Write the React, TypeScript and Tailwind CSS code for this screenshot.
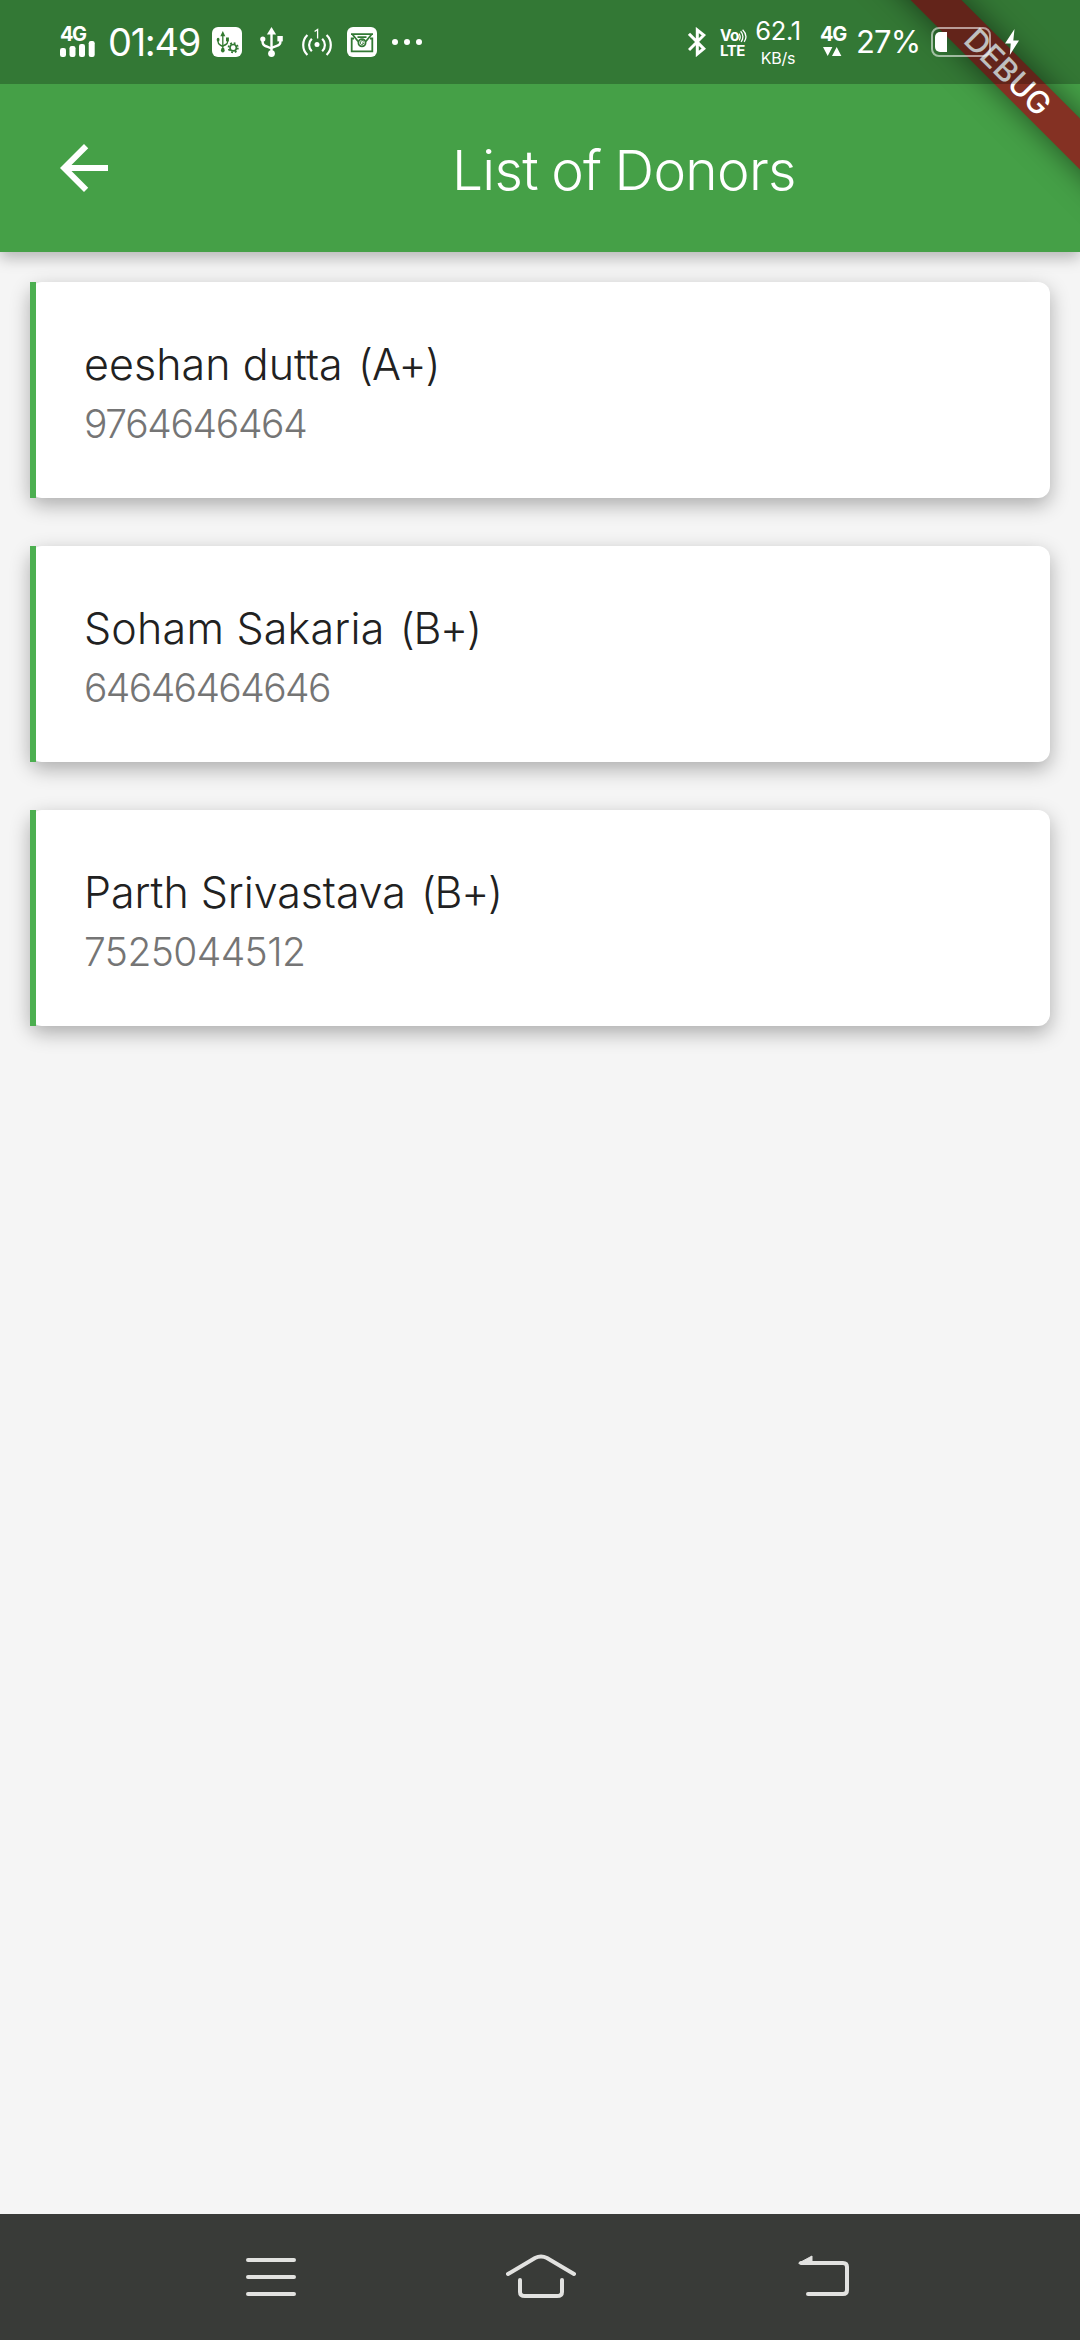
import React from "react";

const donors = [
  { name: "eeshan dutta", group: "(A+)", phone: "9764646464", nameClass: "tracking-[0.05px]", groupClass: "tracking-[-1px]", phoneClass: "tracking-[-1.35px]" },
  { name: "Soham Sakaria", group: "(B+)", phone: "64646464646", nameClass: "tracking-[0.2px]", groupClass: "tracking-[-1.3px]", phoneClass: "tracking-[-1.6px]" },
  { name: "Parth Srivastava", group: "(B+)", phone: "7525044512", nameClass: "tracking-[-0.05px]", groupClass: "tracking-[-1.3px]", phoneClass: "tracking-[-0.6px]" },
];

function UsbShape() {
  return (
    <g fill="none" stroke="currentColor" strokeWidth="2.4">
      <path d="M11.5 6v20" />
      <path d="M2.6 12.5v2.2c0 3 1.6 4 4 4.8l4.9 2M20.4 13v2c0 2.4-1.4 3.2-3.6 3.9l-5.3 2" />
      <path d="M11.5 0l4.6 7.4H6.9z" fill="currentColor" stroke="none" />
      <circle cx="11.5" cy="26.6" r="3.4" fill="currentColor" stroke="none" />
      <circle cx="2.8" cy="12" r="2.6" fill="currentColor" stroke="none" />
      <path d="M17.4 9h5.4v5.4h-5.4z" fill="currentColor" stroke="none" />
    </g>
  );
}

function StatusBar() {
  return (
    <div className="relative z-10 flex h-[84px] items-start overflow-hidden bg-black/25 text-white">
      <div className="ml-[60px] mt-[27px] w-[35px]">
        <div className="h-[14px] text-[20px] leading-[14px] font-bold tracking-[-1.6px]">4G</div>
        <svg className="block" width="35" height="16" viewBox="0 0 35 16" fill="currentColor">
          <rect x="0" y="7" width="6" height="9" rx="2.2" />
          <rect x="9.5" y="5" width="6" height="11" rx="2.2" />
          <rect x="19" y="3" width="6" height="13" rx="2.2" />
          <rect x="28.7" y="0" width="6" height="16" rx="2.2" />
        </svg>
      </div>
      <div className="ml-[13px] mt-[22px] w-[93px] text-[38px] leading-[40px] tracking-[-1.3px] whitespace-nowrap">01:49</div>
      <svg className="ml-[11px] mt-[27px] block" width="30" height="30" viewBox="0 0 30 30">
        <rect width="30" height="30" rx="6" fill="#fff" />
        <g className="text-[#32792f]" transform="translate(4.6 4) scale(.54 .72)"><UsbShape /></g>
        <circle cx="21.2" cy="20.7" r="5.6" fill="#fff" />
        <circle cx="21.2" cy="20.7" r="3.2" fill="none" stroke="#327934" strokeWidth="1.7" />
        <circle cx="21.2" cy="20.7" r="4.7" fill="none" stroke="#327934" strokeWidth="1.7" strokeDasharray="1.85 1.84" />
      </svg>
      <svg className="ml-[18px] mt-[27px] block" width="23" height="30" viewBox="0 0 23 30"><UsbShape /></svg>
      <svg className="ml-[19px] mt-[27px] block" width="30" height="30" viewBox="0 0 30 30" fill="none" stroke="currentColor" strokeWidth="2.2">
        <path d="M5.4 8C-.2 13.5-.2 22.5 5.4 28M24.6 8c5.6 5.5 5.6 14.5 0 20M9.8 11.8c-3.6 3.6-3.6 8.8 0 12.4M20.2 11.8c3.6 3.6 3.6 8.8 0 12.4" />
        <circle cx="15" cy="17.5" r="2.5" fill="currentColor" stroke="none" />
        <path d="M12.6 4.5l3-2.1v9.2" strokeWidth="1.3" />
      </svg>
      <svg className="ml-[15px] mt-[27px] block" width="30" height="30" viewBox="0 0 30 30">
        <rect width="30" height="30" rx="6" fill="#fff" />
        <g fill="none" stroke="#327934" strokeWidth="1.8">
          <path d="M7 11.5H4.7V24.3H25.3V11.5H23" />
          <path d="M4 7.2H26M5.5 7.5l5.7 7M24.5 7.5l-5.7 7M10.5 10.2h9" />
          <circle cx="15" cy="15.7" r="3.6" />
          <path d="M17 14.3c-1.2-1.4-3.6-.8-3.6 1.5s2.8 2.6 3.4.3h-1.7" strokeWidth="1" />
        </g>
      </svg>
      <div className="ml-[15px] mt-[39px] flex gap-[6px]">
        <span className="size-[6px] rounded-full bg-white" />
        <span className="size-[6px] rounded-full bg-white" />
        <span className="size-[6px] rounded-full bg-white" />
      </div>
      <svg className="ml-[266px] mt-[27px] block" width="18" height="30" viewBox="0 0 18 30" fill="none" stroke="currentColor" strokeWidth="3">
        <path d="M1 6.8L15.8 21.6 9.3 27V3L15.8 8.2 1 23" strokeLinejoin="miter" />
      </svg>
      <div className="ml-[14px] mt-[29px] w-[27px]">
        <div className="flex h-[14px] items-start">
          <span className="text-[15.5px] leading-[14px] font-bold tracking-[-0.6px]">Vo</span>
          <svg className="block" width="8" height="14" viewBox="0 0 8 14" fill="none" stroke="currentColor" strokeWidth="1.3">
            <path d="M0 4.5c1.4 2 1.4 5 0 7M1.6 2.3c3 3 3 7.5.5 10.5M3.6.8c4 4 4 8.5 1.6 12" />
          </svg>
        </div>
        <div className="mt-[1px] text-[15px] leading-[14px] font-bold tracking-[-0.4px]">LTE</div>
      </div>
      <div className="ml-[6px] mt-[18px] w-[50px] text-center">
        <div className="text-[25.5px] leading-[26px] tracking-[-0.4px] whitespace-nowrap">62.1</div>
        <div className="mt-[5px] text-[16px] leading-[18px] tracking-[-0.2px] whitespace-nowrap">KB/s</div>
      </div>
      <div className="ml-[17px] mt-[27px] w-[25px]">
        <div className="h-[14px] text-[20px] leading-[14px] font-bold tracking-[-1.4px]">4G</div>
        <svg className="mt-[6px] block" width="25" height="9" viewBox="0 0 25 9" fill="currentColor">
          <path d="M3 0h9.4L7.7 9zM12 9h9.4L16.7 0z" />
        </svg>
      </div>
      <div className="ml-[11px] mt-[24px] w-[65px] text-[31px] leading-[36px] tracking-[-0.8px] whitespace-nowrap">27%</div>
      <div className="ml-[10px] mt-[27px] flex h-[30px] w-[60px] rounded-[8px] border-2 border-white/55 px-[2px] py-[3px]">
        <span className="w-[12px] rounded-l-[5px] bg-white" />
      </div>
      <svg className="ml-[14px] mt-[29px] block" width="14" height="26" viewBox="0 0 14 26" fill="currentColor">
        <path d="M9.5 0L0 14.5h5.7L4.8 26 14 11.5H8.3z" />
      </svg>
    </div>
  );
}

export default function App() {
  return (
    <div className="relative flex h-[2340px] w-[1080px] flex-col overflow-hidden bg-[#f5f5f5] font-['Inter',sans-serif]">
      <header className="relative z-10 h-[252px] bg-[#45a047] shadow-[0_6px_14px_0_rgba(0,0,0,0.26)]">
        <div className="absolute inset-0 overflow-hidden">
          <div className="absolute top-[53.5px] left-[808px] flex h-[36px] w-[400px] rotate-45 items-center justify-center bg-[#843123] shadow-[0_0_30px_rgba(0,0,0,0.5)]">
            <span className="text-[31px] leading-[36px] font-medium tracking-[0px] text-white">DEBUG</span>
          </div>
        </div>
        <StatusBar />
        <div className="flex h-[168px] items-center">
          <svg className="ml-[48px] block" width="72" height="72" viewBox="0 0 24 24" fill="#fff">
            <path d="M20 11H7.83l5.59-5.59L12 4l-8 8 8 8 1.41-1.41L7.83 13H20v-2z" />
          </svg>
          <h1 className="ml-[332px] pt-[4px] text-[55px] leading-[64px] font-light tracking-[-0.7px] [word-spacing:-1.5px] whitespace-nowrap text-white">List of Donors</h1>
        </div>
      </header>
      <main className="flex flex-1 flex-col gap-[48px] px-[30px] pt-[30px]">
        {donors.map((d) => (
          <article key={d.phone} className="flex h-[216px] rounded-[12px] bg-white shadow-[0_7px_20px_rgba(0,0,0,0.3)]">
            <span className="w-[6px] bg-[#4caf50]" />
            <div className="pt-[56px] pl-[48px] whitespace-nowrap">
              <div className={"text-[43px] leading-[52px] font-light text-[#212121] " + d.nameClass}>
                {d.name} <span className={"ml-[3px] " + d.groupClass}>{d.group}</span>
              </div>
              <div className={"mt-[9px] text-[39px] leading-[50px] font-light text-[#757575] " + d.phoneClass}>{d.phone}</div>
            </div>
          </article>
        ))}
      </main>
      <nav className="flex h-[126px] items-start bg-[#393b38] text-[#e2e2e0]">
        <svg className="mt-[44px] ml-[246px] block" width="50" height="38" viewBox="0 0 50 38" stroke="currentColor" strokeWidth="4" strokeLinecap="round">
          <path d="M2 2H48M2 19H48M2 36H48" />
        </svg>
        <svg className="mt-[40px] ml-[210px] block" width="70" height="44" viewBox="0 0 70 44" fill="none" stroke="currentColor" strokeWidth="4" strokeLinecap="round">
          <path d="M2 20L29 4Q35 1.2 41 4L68 20M14 26V38Q14 42 19 42H51Q56 42 56 38V26" />
        </svg>
        <svg className="mt-[41px] ml-[222px] block" width="52" height="42" viewBox="0 0 52 42" fill="none" stroke="currentColor" strokeWidth="4" strokeLinecap="round">
          <path d="M3 8H45Q49 8 49 12V35Q49 39 45 39H10" />
          <path d="M1 8L14 1V8z" fill="currentColor" strokeWidth="1" strokeLinejoin="round" />
        </svg>
      </nav>
    </div>
  );
}
